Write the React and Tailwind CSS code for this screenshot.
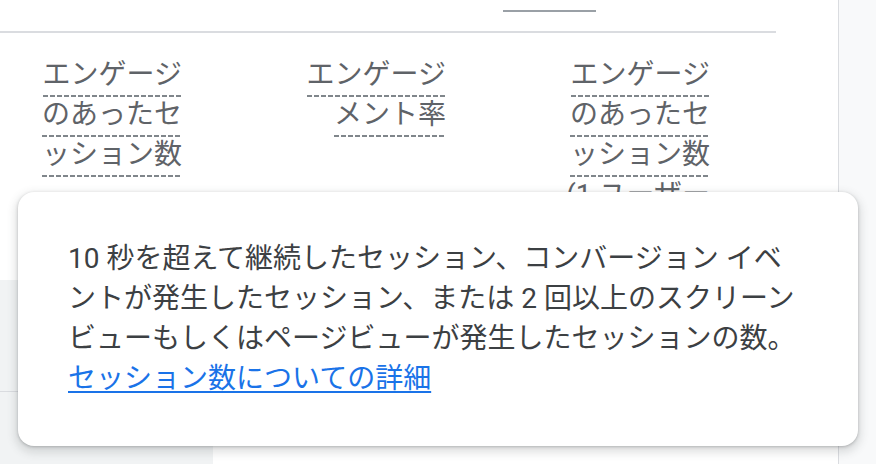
const cols = [
  "エンゲージのあったセッション数",
  "エンゲージメント率",
  "エンゲージのあったセッション数(1 ユーザーあたり)",
];

function HeaderCell({ label }) {
  return (
    <div className="w-[150px] text-right">
      <span className="box-decoration-clone bg-[repeating-linear-gradient(90deg,#80868b_0_5px,transparent_5px_7px)] bg-no-repeat bg-bottom bg-[length:100%_2px] pb-[6px]">
        {label}
      </span>
    </div>
  );
}

export default function App() {
  return (
    <div
      className="w-[876px] h-[464px] overflow-hidden flex bg-[#f8f9fa]"
      style={{ fontFamily: 'Roboto, "Noto Sans CJK JP", sans-serif' }}
    >
      <div className="relative w-[839px] shrink-0 bg-white border-r border-[#dadce0]">
        <div className="w-[776px]">
          {/* ページ送りバー（上端だけ見えている） */}
          <div className="h-[33px] border-b-2 border-[#dadce0] flex items-start text-[28px] text-[#5f6368] overflow-hidden">
            <span className="ml-[293px] w-[190px] -mt-[30px] leading-[28px] text-right whitespace-nowrap shrink-0">
              ページあたりの行数:
            </span>
            <div className="ml-[20px] w-[93px] h-[12px] border-b-2 border-[#9aa0a6] shrink-0" />
            <span className="ml-[104px] -mt-[30px] leading-[28px] whitespace-nowrap">1</span>
          </div>

          {/* 列ヘッダー */}
          <div className="h-[247px] pt-[22px] pl-[32px] flex gap-[114px] text-[28px] leading-[40px] text-[#5f6368] [line-break:loose]">
            {cols.map((c) => (
              <HeaderCell key={c} label={c} />
            ))}
          </div>

          {/* 行 */}
          <div className="flex">
            <div className="w-[213px] h-[112px] bg-[#f1f3f4] border-b border-[#dadce0]" />
            <div className="flex-1 h-[112px] bg-white" />
          </div>
          <div className="flex">
            <div className="w-[213px] h-[80px] bg-[#f1f3f4]" />
            <div className="flex-1 h-[80px] bg-white" />
          </div>
        </div>

        {/* ツールチップ */}
        <div className="absolute left-[18px] top-[192px] w-[840px] rounded-[16px] bg-white px-[50px] py-[47px] text-[28px] leading-[40px] text-[#3c4043] shadow-[0_1px_3px_0_rgba(60,64,67,0.3),0_4px_8px_3px_rgba(60,64,67,0.15)] [line-break:loose]">
          <p>
            10 秒を超えて継続したセッション、コンバージョン イベントが発生したセッション、または 2
            回以上のスクリーンビューもしくはページビューが発生したセッションの数。
          </p>
          <a href="#" className="text-[#1a73e8] underline decoration-2 underline-offset-[3px]">
            セッション数についての詳細
          </a>
        </div>
      </div>
    </div>
  );
}
